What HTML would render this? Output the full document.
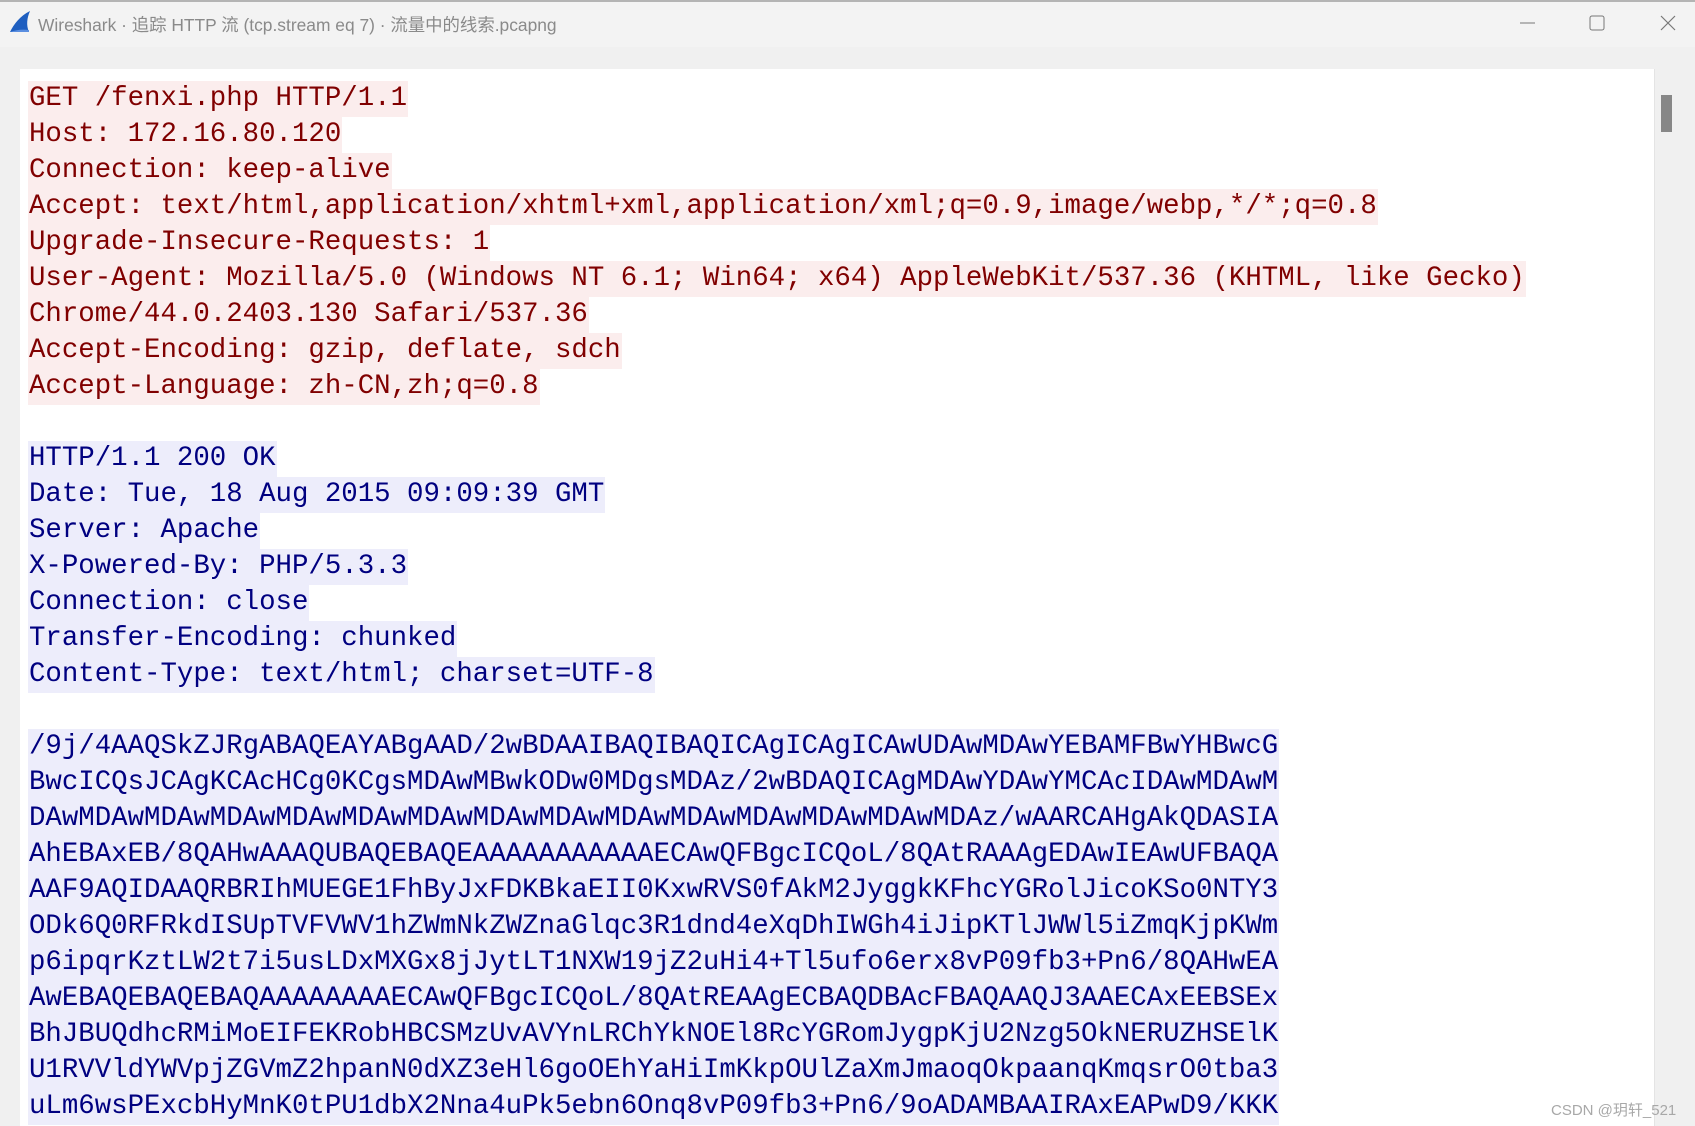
<!DOCTYPE html>
<html><head><meta charset="utf-8"><style>
body{margin:0;width:1695px;height:1126px;overflow:hidden;background:#f0f0f0;position:relative;font-family:"Liberation Sans","Noto Sans CJK SC",sans-serif}
.top{position:absolute;left:0;top:0;width:1695px;height:2px;background:#b4b4b4}
.tb{position:absolute;left:0;top:2px;width:1695px;height:45px;background:#f3f3f3}
.title{position:absolute;left:38px;top:10px;font-size:17.4px;color:#8a8a8a;white-space:nowrap}
.content{position:absolute;left:20px;top:69px;width:1634px;height:1057px;background:#fff;overflow:hidden}
.sb{position:absolute;left:1654px;top:69px;width:30px;height:1057px;background:#f0f0f0;border-left:1px solid #e4e4e4}
.thumb{position:absolute;left:1661px;top:95px;width:11px;height:37px;background:#878787}
pre{margin:0;position:absolute;left:8px;top:12px;font-family:"Liberation Mono","DejaVu Sans Mono",monospace;font-size:27.4px;line-height:36px}
.q span{background:#fbeded;color:#800000}
.r span{background:#ededfb;color:#000080}
span{display:inline-block;height:36px;padding:0 1px}
.wm{position:absolute;left:1551px;top:1099px;font-size:15px;color:#a8a8a8;white-space:nowrap}
</style></head><body>
<div class="top"></div>
<div class="tb">
<svg style="position:absolute;left:8px;top:8px" width="24" height="24" viewBox="0 0 24 24"><path d="M2 22 C6 14 12 6 22 1 C19 8 18 15 21 22 Z" fill="#1f5fc0"/><path d="M2 22 L21 22 L21 20 C14 19 8 20 2 22Z" fill="#5a8ee0"/></svg>
<div class="title">Wireshark · 追踪 HTTP 流 (tcp.stream eq 7) · 流量中的线索.pcapng</div>
<svg style="position:absolute;left:1518px;top:9px" width="170" height="24"><line x1="2" y1="12" x2="17" y2="12" stroke="#777" stroke-width="1"/><rect x="72" y="5" width="14" height="14" rx="2" fill="none" stroke="#777" stroke-width="1"/><path d="M143 5 L157 19 M157 5 L143 19" stroke="#777" stroke-width="1.2"/></svg>
</div>
<div class="content"><pre><div class="q"><span>GET /fenxi.php HTTP/1.1</span>
<span>Host: 172.16.80.120</span>
<span>Connection: keep-alive</span>
<span>Accept: text/html,application/xhtml+xml,application/xml;q=0.9,image/webp,*/*;q=0.8</span>
<span>Upgrade-Insecure-Requests: 1</span>
<span>User-Agent: Mozilla/5.0 (Windows NT 6.1; Win64; x64) AppleWebKit/537.36 (KHTML, like Gecko)</span>
<span>Chrome/44.0.2403.130 Safari/537.36</span>
<span>Accept-Encoding: gzip, deflate, sdch</span>
<span>Accept-Language: zh-CN,zh;q=0.8</span>
</div>
<div class="r"><span>HTTP/1.1 200 OK</span>
<span>Date: Tue, 18 Aug 2015 09:09:39 GMT</span>
<span>Server: Apache</span>
<span>X-Powered-By: PHP/5.3.3</span>
<span>Connection: close</span>
<span>Transfer-Encoding: chunked</span>
<span>Content-Type: text/html; charset=UTF-8</span>

<span>/9j/4AAQSkZJRgABAQEAYABgAAD/2wBDAAIBAQIBAQICAgICAgICAwUDAwMDAwYEBAMFBwYHBwcG</span>
<span>BwcICQsJCAgKCAcHCg0KCgsMDAwMBwkODw0MDgsMDAz/2wBDAQICAgMDAwYDAwYMCAcIDAwMDAwM</span>
<span>DAwMDAwMDAwMDAwMDAwMDAwMDAwMDAwMDAwMDAwMDAwMDAwMDAwMDAwMDAz/wAARCAHgAkQDASIA</span>
<span>AhEBAxEB/8QAHwAAAQUBAQEBAQEAAAAAAAAAAAECAwQFBgcICQoL/8QAtRAAAgEDAwIEAwUFBAQA</span>
<span>AAF9AQIDAAQRBRIhMUEGE1FhByJxFDKBkaEII0KxwRVS0fAkM2JyggkKFhcYGRolJicoKSo0NTY3</span>
<span>ODk6Q0RFRkdISUpTVFVWV1hZWmNkZWZnaGlqc3R1dnd4eXqDhIWGh4iJipKTlJWWl5iZmqKjpKWm</span>
<span>p6ipqrKztLW2t7i5usLDxMXGx8jJytLT1NXW19jZ2uHi4+Tl5ufo6erx8vP09fb3+Pn6/8QAHwEA</span>
<span>AwEBAQEBAQEBAQAAAAAAAAECAwQFBgcICQoL/8QAtREAAgECBAQDBAcFBAQAAQJ3AAECAxEEBSEx</span>
<span>BhJBUQdhcRMiMoEIFEKRobHBCSMzUvAVYnLRChYkNOEl8RcYGRomJygpKjU2Nzg5OkNERUZHSElK</span>
<span>U1RVVldYWVpjZGVmZ2hpanN0dXZ3eHl6goOEhYaHiImKkpOUlZaXmJmaoqOkpaanqKmqsrO0tba3</span>
<span>uLm6wsPExcbHyMnK0tPU1dbX2Nna4uPk5ebn6Onq8vP09fb3+Pn6/9oADAMBAAIRAxEAPwD9/KKK</span></div></pre></div>
<div class="sb"></div><div class="thumb"></div>
<div class="wm">CSDN @玥轩_521</div>
</body></html>
